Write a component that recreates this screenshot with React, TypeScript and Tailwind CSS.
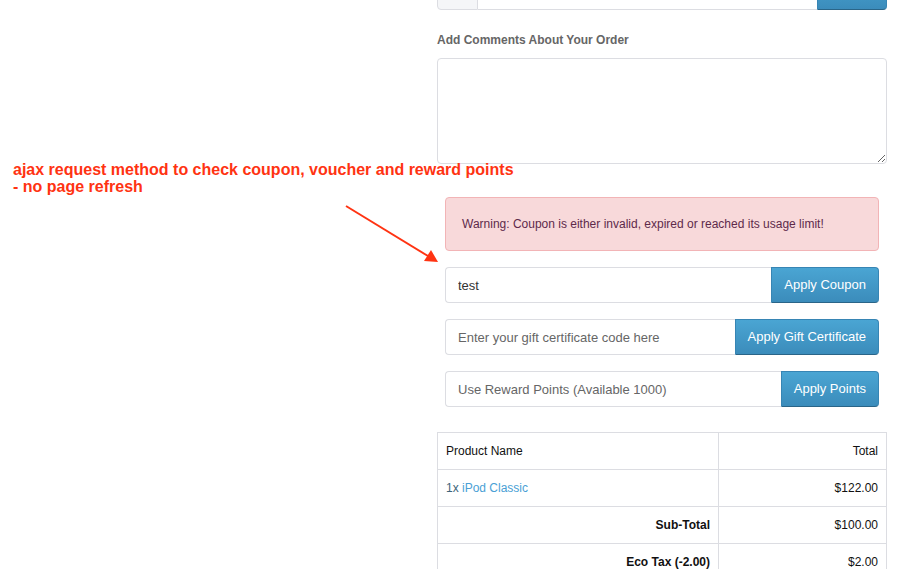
import React from "react";

const btn =
  "h-full shrink-0 rounded-r-[4px] border border-[#3785b4] border-b-[#2a6588] bg-gradient-to-b from-[#4aa5d3] to-[#3b8cbb] px-3 text-[13px] text-white";

const InputGroup = ({
  value,
  placeholder,
  label,
}: {
  value?: string;
  placeholder?: string;
  label: string;
}) => (
  <div className="flex h-[36px]">
    <input
      readOnly
      value={value}
      placeholder={placeholder}
      className="h-full min-w-0 flex-1 rounded-l-[4px] border border-r-0 border-[#dcdde2] px-3 text-[13px] text-[#333] placeholder:text-[#666] outline-none"
    />
    <button className={btn}>{label}</button>
  </div>
);

export default function App() {
  return (
    <div className="relative h-[569px] w-[901px] overflow-hidden bg-white font-['Liberation_Sans',Arial,sans-serif]">
      {/* annotation */}
      <div className="absolute left-[13px] top-[161px] text-[16px] font-bold leading-[17px] text-[#ff3312]">
        <p>ajax request method to check coupon, voucher and reward points</p>
        <p>- no page refresh</p>
      </div>
      <svg
        className="absolute left-0 top-0"
        width="901"
        height="569"
        viewBox="0 0 901 569"
      >
        <line x1="346" y1="206" x2="428" y2="256" stroke="#ff3312" strokeWidth="2" />
        <polygon points="438,262 424,261 431,250" fill="#ff3312" />
      </svg>

      <div className="ml-[437px] w-[450px]">
        {/* partially visible group above */}
        <div className="-mt-[26px] flex h-[36px]">
          <span className="w-[41px] rounded-l-[4px] border border-[#dcdde2] bg-[#f5f6f8]" />
          <input readOnly className="min-w-0 flex-1 border-y border-[#dcdde2] outline-none" />
          <button className="w-[70px] rounded-r-[4px] border border-[#3785b4] border-b-[#2a6588] bg-gradient-to-b from-[#4aa5d3] to-[#3b8cbb]" />
        </div>

        <label className="mt-[22px] block text-[12px] font-bold leading-[17px] text-[#666]">
          Add Comments About Your Order
        </label>
        <textarea
          readOnly
          className="mt-[9px] block h-[106px] w-full rounded-[4px] border border-[#dcdde2] outline-none"
        />

        <div className="mt-[33px] flex flex-col gap-[16px] px-2">
          <div className="flex h-[54px] items-center rounded-[4px] border border-[#f2b4b6] bg-[#f8d9da] px-4 text-[12px] text-[#5e2a4a]">
            Warning: Coupon is either invalid, expired or reached its usage limit!
          </div>
          <InputGroup value="test" label="Apply Coupon" />
          <InputGroup placeholder="Enter your gift certificate code here" label="Apply Gift Certificate" />
          <InputGroup placeholder="Use Reward Points (Available 1000)" label="Apply Points" />
        </div>

        <table className="mt-[25px] w-full border-collapse text-[12px] text-[#111]">
          <tbody>
            <tr className="h-[37px]">
              <td className="w-[281px] border border-[#dcdde2] px-2">Product Name</td>
              <td className="border border-[#dcdde2] px-2 text-right">Total</td>
            </tr>
            <tr className="h-[37px]">
              <td className="border border-[#dcdde2] px-2">
                <span className="text-[#3d6479]">1x </span>
                <a className="text-[#4a9fd5]">iPod Classic</a>
              </td>
              <td className="border border-[#dcdde2] px-2 text-right">$122.00</td>
            </tr>
            <tr className="h-[37px]">
              <td className="border border-[#dcdde2] px-2 text-right font-bold">Sub-Total</td>
              <td className="border border-[#dcdde2] px-2 text-right">$100.00</td>
            </tr>
            <tr className="h-[37px]">
              <td className="border border-[#dcdde2] px-2 text-right font-bold">Eco Tax (-2.00)</td>
              <td className="border border-[#dcdde2] px-2 text-right">$2.00</td>
            </tr>
          </tbody>
        </table>
      </div>
    </div>
  );
}
